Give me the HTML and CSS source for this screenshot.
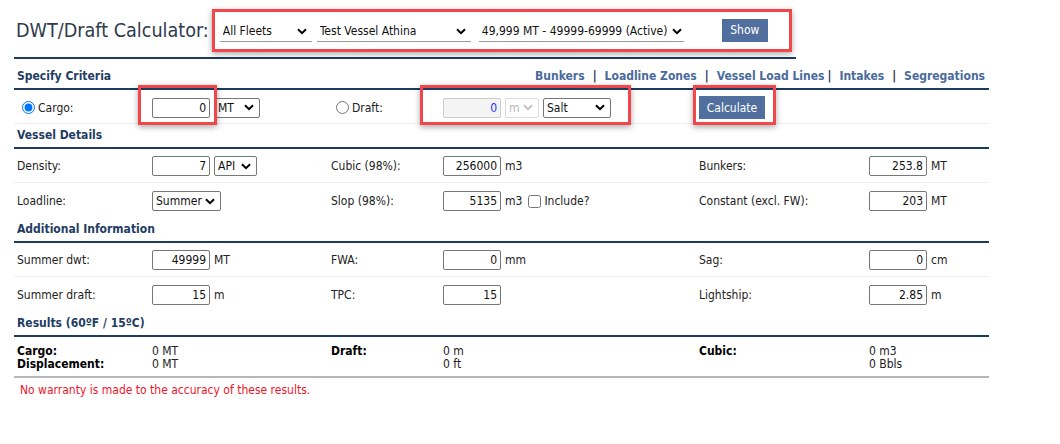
FILE: index.html
```html
<!DOCTYPE html>
<html>
<head>
<meta charset="utf-8">
<link rel="stylesheet" href="styles.css">
</head>
<body>
<div class="page">
  <div class="topbar">
    <h1 class="title">DWT/Draft Calculator:</h1>
    <div class="picker hl">
      <select class="uline w-fleet"><option>All Fleets</option></select>
      <select class="uline w-vessel"><option>Test Vessel Athina</option></select>
      <select class="uline w-range"><option>49,999 MT - 49999-69999 (Active)</option></select>
      <button class="btn btn-show">Show</button>
    </div>
  </div>

  <div class="sect-head first">
    <span>Specify Criteria</span>
    <nav class="links">
      <a>Bunkers</a><span class="sep">|</span><a>Loadline Zones</a><span class="sep">|</span><a>Vessel Load Lines</a><span class="sep tight">|</span><a>Intakes</a><span class="sep">|</span><a>Segregations</a>
    </nav>
  </div>
  <div class="row criteria">
    <div class="cell"><label class="radio"><input type="radio" name="mode" checked>Cargo:</label></div>
    <div class="cell"><input class="num" value="0"><select class="sel w-mt"><option>MT</option></select></div>
    <div class="cell"><label class="radio"><input type="radio" name="mode">Draft:</label></div>
    <div class="cell"><input class="num dis" value="0" disabled><select class="sel w-m" disabled><option>m</option></select><select class="sel w-salt"><option>Salt</option></select></div>
    <div class="cell"><button class="btn btn-calc">Calculate</button></div>
    <div class="cell"></div>
    <div class="mark mark-cargo"></div>
    <div class="mark mark-draft"></div>
    <div class="mark mark-calc"></div>
  </div>

  <div class="sect-head"><span>Vessel Details</span></div>
  <div class="row">
    <div class="cell">Density:</div>
    <div class="cell"><input class="num" value="7"><select class="sel w-api"><option>API</option></select></div>
    <div class="cell">Cubic (98%):</div>
    <div class="cell"><input class="num" value="256000"><span>m3</span></div>
    <div class="cell">Bunkers:</div>
    <div class="cell"><input class="num" value="253.8"><span>MT</span></div>
  </div>
  <div class="row noline">
    <div class="cell">Loadline:</div>
    <div class="cell"><select class="sel w-summer"><option>Summer</option></select></div>
    <div class="cell">Slop (98%):</div>
    <div class="cell"><input class="num" value="5135"><span>m3</span><label class="check"><input type="checkbox">Include?</label></div>
    <div class="cell">Constant (excl. FW):</div>
    <div class="cell"><input class="num" value="203"><span>MT</span></div>
  </div>

  <div class="sect-head"><span>Additional Information</span></div>
  <div class="row">
    <div class="cell">Summer dwt:</div>
    <div class="cell"><input class="num" value="49999"><span>MT</span></div>
    <div class="cell">FWA:</div>
    <div class="cell"><input class="num" value="0"><span>mm</span></div>
    <div class="cell">Sag:</div>
    <div class="cell"><input class="num" value="0"><span>cm</span></div>
  </div>
  <div class="row noline">
    <div class="cell">Summer draft:</div>
    <div class="cell"><input class="num" value="15"><span>m</span></div>
    <div class="cell">TPC:</div>
    <div class="cell"><input class="num" value="15"></div>
    <div class="cell">Lightship:</div>
    <div class="cell"><input class="num" value="2.85"><span>m</span></div>
  </div>

  <div class="sect-head"><span>Results (60ºF / 15ºC)</span></div>
  <div class="row results">
    <div class="cell stack bold"><span>Cargo:</span><span>Displacement:</span></div>
    <div class="cell stack"><span>0 MT</span><span>0 MT</span></div>
    <div class="cell stack bold"><span>Draft:</span></div>
    <div class="cell stack"><span>0 m</span><span>0 ft</span></div>
    <div class="cell stack bold"><span>Cubic:</span></div>
    <div class="cell stack"><span>0 m3</span><span>0 Bbls</span></div>
  </div>
  <p class="warning">No warranty is made to the accuracy of these results.</p>
</div>
</body>
</html>
```

FILE: styles.css
```css
* { box-sizing: border-box; }
body {
  margin: 0;
  background: #fff;
  font-family: "DejaVu Sans Condensed", "DejaVu Sans", sans-serif;
  font-size: 12px;
  color: #222;
}
.page {
  padding-left: 14px;
  width: 989px;
}
.topbar {
  display: inline-flex;
  align-items: center;
  padding: 9px 4px 5px 0;
  border-bottom: 2px solid #1d3a60;
}
.title {
  margin: 0 3px 0 2px;
  font-size: 19.6px;
  font-weight: normal;
  color: #2e3a4c;
  line-height: 24px;
}
.hl {
  border: 3px solid #f2474a;
  box-shadow: 0 2px 6px rgba(0,0,0,0.35);
}
.picker {
  display: flex;
  align-items: center;
  height: 43px;
  padding: 2px 21px 3px 5px;
}
select, input, button { font-family: inherit; font-size: 12px; color: #111; }
select {
  -webkit-appearance: none;
  appearance: none;
  background-color: #fff;
  background-image: url("data:image/svg+xml,%3Csvg xmlns='http://www.w3.org/2000/svg' width='10' height='7'%3E%3Cpath d='M1 1.2l4 4 4-4' fill='none' stroke='%23000' stroke-width='2'/%3E%3C/svg%3E");
  background-repeat: no-repeat;
  background-position: right 5px center;
}
select:disabled {
  background-image: url("data:image/svg+xml,%3Csvg xmlns='http://www.w3.org/2000/svg' width='10' height='7'%3E%3Cpath d='M1 1.2l4 4 4-4' fill='none' stroke='%23aaa' stroke-width='2'/%3E%3C/svg%3E");
}
.uline {
  border: none;
  border-bottom: 1px solid #9a9a9a;
  border-radius: 0;
  height: 19px;
  padding: 0 16px 1px 3px;
  margin-right: 5px;
  margin-top: 4px;
}
.w-fleet { width: 92px; }
.w-vessel { width: 154px; margin-right: 8px; }
.w-range { width: 205px; margin-right: 38px; background-position: right 2px center; }
.btn {
  background: #516f9e;
  color: #fff;
  border: none;
  height: 23px;
  padding: 0 4px;
  font-size: 12px;
}
.btn-show { width: 46px; }
.btn-calc { width: 66px; }

.sect-head {
  display: flex;
  justify-content: space-between;
  align-items: center;
  height: 25px;
  padding: 0 3px 1px 3px;
  border-bottom: 2px solid #1d3a60;
  font-weight: bold;
  color: #1f3d63;
}
.sect-head.first { margin-top: 6px; }
.links { display: flex; align-items: center; padding-right: 1px; }
.links a { color: #4a6a9c; }
.sep { color: #1d3050; margin: 0 8px; font-weight: bold; }
.sep.tight { margin-left: 3px; }

.row {
  display: grid;
  grid-template-columns: 135px 179px 112px 256px 170px 123px;
  height: 34px;
  padding-top: 1px;
  align-items: center;
  border-bottom: 1px solid #eeeeee;
  position: relative;
}
.row.noline { border-bottom: none; height: 35px; }
.row.criteria { padding-top: 2px; }
.cell {
  display: flex;
  align-items: center;
  gap: 4px;
  padding-left: 3px;
  white-space: nowrap;
}
.num {
  width: 58px;
  height: 20px;
  border: 1px solid #777;
  border-radius: 2px;
  text-align: right;
  padding: 0 3px;
  background: #fff;
}
.num.dis { background: #f4f4f4; border-color: #ccc; color: #2233ff; -webkit-text-fill-color: #2233ff; }
.sel {
  height: 20px;
  border: 1px solid #777;
  border-radius: 2px;
  padding: 0 16px 0 3px;
}
.sel:disabled { border-color: #ccc; color: #999; }
.w-mt { width: 46px; }
.w-m { width: 34px; }
.w-salt { width: 68px; }
.w-api { width: 43px; }
.w-summer { width: 69px; }
.radio { display: flex; align-items: center; }
.radio input { margin: 0 3px 0 5px; width: 13px; height: 13px; }
.check { display: flex; align-items: center; margin-left: 2px; }
.check input { margin: 0 3px 0 0; width: 13px; height: 13px; }

.results {
  height: auto;
  align-items: start;
  padding: 8px 0 5px;
  border-bottom: 2px solid #b3b8bf;
}
.stack { flex-direction: column; align-items: flex-start; gap: 0; line-height: 13px; }
.stack.bold { font-weight: bold; color: #000; }
.warning {
  margin: 5px 0 0 6px;
  color: #f0142a;
}

.mark { position: absolute; top: -5px; height: 40px; }
.criteria .mark { border: 3px solid #f2474a; box-shadow: 0 2px 6px rgba(0,0,0,0.35); }
.mark-cargo { left: 124px; width: 79px; }
.mark-draft { left: 406px; width: 211px; }
.mark-calc { left: 679px; width: 83px; }
```
